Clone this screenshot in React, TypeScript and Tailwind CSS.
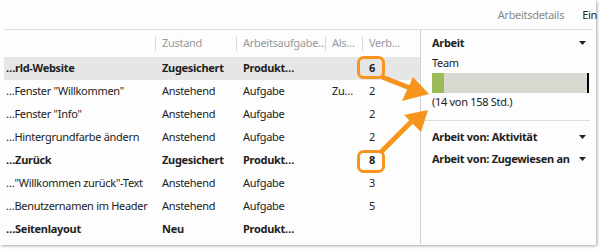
const rows = [
  { name: '…rld-Website', state: 'Zugesichert', type: 'Produkt…', als: '', verb: '6', bold: true, sel: true },
  { name: '…Fenster "Willkommen"', state: 'Anstehend', type: 'Aufgabe', als: 'Zu…', verb: '2' },
  { name: '…Fenster "Info"', state: 'Anstehend', type: 'Aufgabe', als: '', verb: '2' },
  { name: '…Hintergrundfarbe ändern', state: 'Anstehend', type: 'Aufgabe', als: '', verb: '2' },
  { name: '…Zurück', state: 'Zugesichert', type: 'Produkt…', als: '', verb: '8', bold: true },
  { name: '…"Willkommen zurück"-Text', state: 'Anstehend', type: 'Aufgabe', als: '', verb: '3' },
  { name: '…Benutzernamen im Header', state: 'Anstehend', type: 'Aufgabe', als: '', verb: '5' },
  { name: '…Seitenlayout', state: 'Neu', type: 'Produkt…', als: '', verb: '', bold: true },
]

const cols = ['w-[151px] pl-[2px]', 'w-[81px] pl-[6px]', 'w-[89px] pl-[6px]', 'w-[37px] pl-[6px]', 'flex-1 pl-[6px]']

function Caret() {
  return (
    <svg width="7" height="4" viewBox="0 0 7 4" className="mr-[4px]">
      <path d="M0 0H7L3.5 4Z" fill="#222" />
    </svg>
  )
}

function Header({ label }: { label: string }) {
  return (
    <div className="flex h-[22px] items-center justify-between">
      <span className="font-bold">{label}</span>
      <Caret />
    </div>
  )
}

export default function App() {
  return (
    <div className="relative h-[251px] w-[600px] overflow-hidden bg-white font-['Noto_Sans','DejaVu_Sans',sans-serif] text-[11px] tracking-[-0.3px] text-[#222]">
      <div className="flex h-[245px] w-[596px] flex-col bg-[#fdfdfd] shadow-[1px_1px_3px_rgba(0,0,0,0.35)]">
        <div className="flex h-[29px] shrink-0 items-center justify-end gap-[18px] pt-[1px]">
          <span className="text-[#8a8a8a]">Arbeitsdetails</span>
          <span className="mr-[-1px]">Ein</span>
        </div>
        <div className="ml-[4px] mr-[3px] flex flex-1 border-t border-[#dedede]">
          <div className="w-[416px] shrink-0">
            <div className="flex h-[27px] items-center text-[#999]">
              <div className={cols[0]} />
              {['Zustand', 'Arbeitsaufgabe…', 'Als…', 'Verb…'].map((h, i) => (
                <div key={h} className={`${cols[i + 1]} flex h-[15px] items-center overflow-hidden whitespace-nowrap border-l border-[#dadada]`}>
                  {h}
                </div>
              ))}
            </div>
            {rows.map((r) => (
              <div
                key={r.name}
                className={`flex h-[23px] items-center whitespace-nowrap ${r.bold ? 'font-bold' : ''} ${r.sel ? 'bg-[#e6e6e6]' : ''}`}
              >
                <div className={cols[0]}>{r.name}</div>
                <div className={`${cols[1]} border-l border-transparent`}>{r.state}</div>
                <div className={`${cols[2]} border-l border-transparent`}>{r.type}</div>
                <div className={`${cols[3]} border-l border-transparent font-normal`}>{r.als}</div>
                <div className={`${cols[4]} border-l border-transparent`}>{r.verb}</div>
              </div>
            ))}
          </div>
          <div className="mb-[1px] flex-1 border-l border-[#cfcfcf] pl-[11px] pr-[3px] pt-[2px]">
            <Header label="Arbeit" />
            <div className="mt-[1px] leading-[15px]">Team</div>
            <div className="mt-[3px] flex h-[20px] w-[157px] bg-[#d9d9d1]">
              <div className="w-[12px] bg-[#9bbb59]" />
              <div className="flex-1" />
              <div className="w-[2px] bg-black" />
            </div>
            <div className="mt-[1px] leading-[16px]">(14 von 158 Std.)</div>
            <div className="-ml-[10px] mt-[10px] border-t border-[#dedede] pt-[5px] pl-[10px]">
              <Header label="Arbeit von: Aktivität" />
              <Header label="Arbeit von: Zugewiesen an" />
            </div>
          </div>
        </div>
      </div>

      <svg className="pointer-events-none absolute left-0 top-0" width="600" height="251">
        <g fill="none" stroke="#f7941d" strokeWidth="3">
          <rect x="358.5" y="57.5" width="25" height="20" rx="5" />
          <rect x="358.5" y="151.5" width="25" height="20" rx="5" />
          <path d="M382 77L410 88" strokeWidth="5" />
          <path d="M381 152L412 121" strokeWidth="5" />
        </g>
        <path d="M429 94L402 101L413 77Z" fill="#f7941d" />
        <path d="M428 110L421 132L404 115Z" fill="#f7941d" />
      </svg>
    </div>
  )
}
